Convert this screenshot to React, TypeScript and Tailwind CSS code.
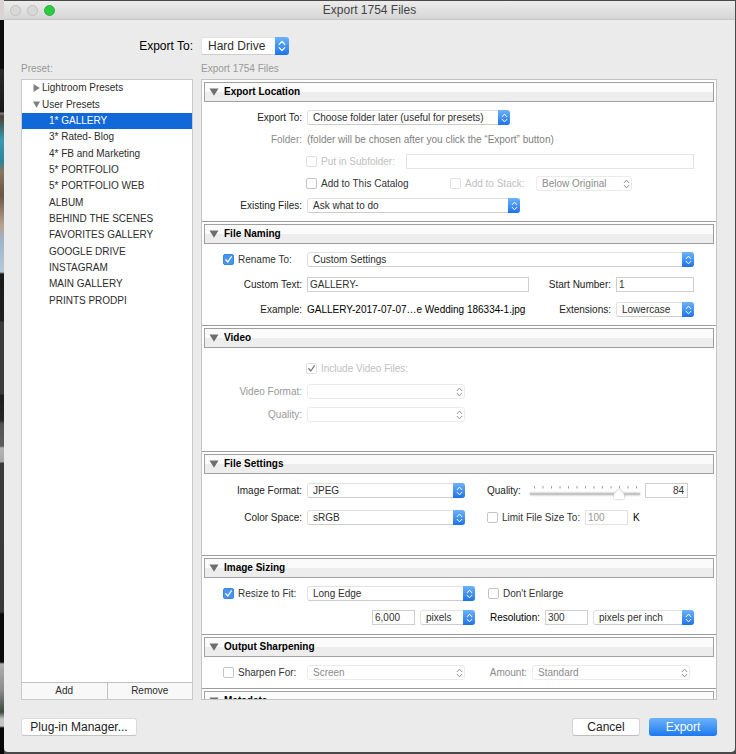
import React, { useState } from "react";
import clsx from "clsx";

type SelectFieldProp = {
  id: string;
  options: string[];
  width: string;
  large?: boolean;
  disabled?: boolean;
};

type CheckFieldProp = {
  id: string;
  label: string;
  checked?: boolean;
  disabled?: boolean;
  faded?: boolean;
};

type TextFieldProp = {
  id: string;
  value?: string;
  width: string;
  disabled?: boolean;
  align?: string;
};

type SectionProp = {
  title: string;
  spacing: string;
  first?: boolean;
  children?: React.ReactNode;
};

const userPresets = [
  "1* GALLERY",
  "3* Rated- Blog",
  "4* FB and Marketing",
  "5* PORTFOLIO",
  "5* PORTFOLIO WEB",
  "ALBUM",
  "BEHIND THE SCENES",
  "FAVORITES GALLERY",
  "GOOGLE DRIVE",
  "INSTAGRAM",
  "MAIN GALLERY",
  "PRINTS PRODPI",
];

const SelectField: React.FC<SelectFieldProp> = ({
  id,
  options,
  width,
  large,
  disabled,
}) => (
  <div className={clsx("relative", large ? "h-[18px]" : "h-[15px]", width)}>
    <select
      id={id}
      disabled={disabled}
      className={clsx(
        "block h-full w-full appearance-none rounded-[3px] border bg-white pr-4 leading-none",
        large ? "pl-[6px] text-[12px]" : "pl-[5px] text-[10px]",
        disabled
          ? "border-[#ebebeb] text-[#8c8c8c] opacity-100"
          : "border-[#e2e2e2] border-b-[#cccccc] text-[#2e2e2e]"
      )}
    >
      {options.map((option) => (
        <option key={option}>{option}</option>
      ))}
    </select>
    <span
      className={clsx(
        "pointer-events-none absolute inset-y-0 right-0 flex items-center justify-center rounded-r-[3px]",
        large ? "w-[14px]" : "w-[12px]",
        disabled
          ? "text-[#8c8c8c]"
          : "bg-linear-to-b from-[#6db3f8] to-[#1b72e8] text-white"
      )}
    >
      <svg
        viewBox="0 0 8 12"
        className={large ? "h-3 w-2" : "h-[10px] w-[7px]"}
        fill="none"
        stroke="currentColor"
        strokeWidth="1.2"
        strokeLinecap="round"
        strokeLinejoin="round"
      >
        <path d="M1.2 4.4 4 1.4l2.8 3M1.2 7.6 4 10.6l2.8-3" />
      </svg>
    </span>
  </div>
);

const CheckField: React.FC<CheckFieldProp> = ({
  id,
  label,
  checked,
  disabled,
  faded,
}) => (
  <div className="flex items-center gap-1 whitespace-nowrap">
    <span className="relative block size-[11px]">
      <input
        id={id}
        type="checkbox"
        defaultChecked={checked}
        disabled={disabled}
        className={clsx(
          "peer block size-[11px] appearance-none rounded-[2px] border bg-white",
          disabled
            ? "border-[#e0e0e0]"
            : "border-[#c4c4c4] checked:border-[#3a86e0] checked:bg-[#4795ee]"
        )}
      />
      <svg
        viewBox="0 0 11 11"
        className={clsx(
          "pointer-events-none absolute inset-0 hidden size-[11px] peer-checked:block",
          disabled ? "text-[#777]" : "text-white"
        )}
        fill="none"
        stroke="currentColor"
        strokeWidth="1.3"
        strokeLinecap="round"
        strokeLinejoin="round"
      >
        <path d="M2.8 5.8 4.8 8 8.3 2.8" />
      </svg>
    </span>
    <label
      htmlFor={id}
      className={faded ? "text-[#c0c0c0]" : "text-[#333]"}
    >
      {label}
    </label>
  </div>
);

const TextField: React.FC<TextFieldProp> = ({
  id,
  value,
  width,
  disabled,
  align,
}) => (
  <input
    id={id}
    type="text"
    defaultValue={value}
    disabled={disabled}
    className={clsx(
      "block h-[15px] min-w-0 border bg-white px-[2px] text-[10px] leading-none",
      disabled ? "border-[#e4e4e4] text-[#999]" : "border-[#cfcfcf] text-[#333]",
      width,
      align
    )}
  />
);

// Right aligned caption in the first column of a section
const RowLabel: React.FC<{ htmlFor: string; text: string; muted?: boolean }> = ({
  htmlFor,
  text,
  muted,
}) => (
  <label
    htmlFor={htmlFor}
    className={clsx(
      "w-[100px] shrink-0 text-right",
      muted ? "text-[#999]" : "text-[#222]"
    )}
  >
    {text}
  </label>
);

const Row: React.FC<{ children?: React.ReactNode }> = ({ children }) => (
  <div className="flex h-[15px] items-center gap-[5px] whitespace-nowrap">
    {children}
  </div>
);

const Section: React.FC<SectionProp> = ({ title, spacing, first, children }) => (
  <section
    className={clsx("shrink-0 pt-[2px]", !first && "border-t border-[#9c9c9c]")}
  >
    <h2 className="mx-[2px]">
      <button
        type="button"
        className="flex h-5 w-full items-center gap-[5px] border border-[#a0a0a0] bg-linear-to-b from-[#fbfbfb] from-50% to-[#ededed] to-50% pl-1 text-[10px] font-bold text-black"
      >
        <svg viewBox="0 0 10 8" className="h-2 w-[10px]" fill="#6e6e6e">
          <path d="M0.5 0.5h9L5 7.8z" />
        </svg>
        {title}
      </button>
    </h2>
    <div className={clsx("flex flex-col pr-[22px]", spacing)}>{children}</div>
  </section>
);

const QualitySlider = () => {
  const [quality, setQuality] = useState(84);

  return (
    <>
      <div className="relative h-[15px] w-[110px]">
        <svg
          viewBox="0 0 110 15"
          className="absolute inset-0 h-[15px] w-[110px]"
          stroke="#a0a0a0"
          strokeWidth="1"
        >
          {Array.from({ length: 13 }, (_, i) => (
            <path key={i} d={`M${4.5 + i * 8.5} 3v2.5`} />
          ))}
        </svg>
        <input
          id="quality"
          type="range"
          min={0}
          max={100}
          value={quality}
          onChange={(e) => setQuality(Number(e.target.value))}
          className="absolute inset-x-0 top-[6px] block h-[10px] w-full appearance-none bg-transparent drop-shadow-[0_0_1px_#aaa] [&::-webkit-slider-runnable-track]:h-[2px] [&::-webkit-slider-runnable-track]:bg-[#c4c4c4] [&::-webkit-slider-thumb]:-mt-1 [&::-webkit-slider-thumb]:h-[10px] [&::-webkit-slider-thumb]:w-[10px] [&::-webkit-slider-thumb]:appearance-none [&::-webkit-slider-thumb]:bg-white [&::-webkit-slider-thumb]:[clip-path:polygon(50%_0,100%_50%,100%_100%,0_100%,0_50%)]"
        />
      </div>
      <input
        type="text"
        aria-label="Quality value"
        value={quality}
        onChange={(e) => setQuality(Number(e.target.value) || 0)}
        className="block h-[15px] w-[43px] border border-[#cfcfcf] bg-white px-[3px] text-right text-[10px] leading-none text-[#333]"
      />
    </>
  );
};

const PresetList = () => {
  const [selected, setSelected] = useState("1* GALLERY");

  return (
    <div className="flex w-[172px] shrink-0 flex-col border border-[#c9c9c9] bg-white">
      <ul className="grid h-[229px] auto-rows-fr text-[#2c2c2c]">
        <li className="flex items-center">
          <button type="button" className="flex items-center gap-[2px] pl-[11px]">
            <svg viewBox="0 0 7 8" className="h-2 w-[7px]" fill="#808080">
              <path d="M0.5 0 6.8 4 0.5 8z" />
            </svg>
            Lightroom Presets
          </button>
        </li>
        <li className="flex items-center">
          <button type="button" className="flex items-center gap-[2px] pl-[11px]">
            <svg viewBox="0 0 7 7" className="size-[7px]" fill="#808080">
              <path d="M0 0.5h7L3.5 6.8z" />
            </svg>
            User Presets
          </button>
        </li>
        {userPresets.map((preset) => (
          <li key={preset} className="flex">
            <button
              type="button"
              onClick={() => setSelected(preset)}
              className={clsx(
                "w-full pl-[27px] text-left",
                preset === selected && "bg-[#1168d8] text-white"
              )}
            >
              {preset}
            </button>
          </li>
        ))}
      </ul>
      <div className="mt-auto flex h-[17px] border-t border-[#c0c0c0] bg-[#f8f8f8] text-[#2c2c2c]">
        <button type="button" className="flex-1 border-r border-[#c0c0c0]">
          Add
        </button>
        <button type="button" className="flex-1">
          Remove
        </button>
      </div>
    </div>
  );
};

const SettingsPanel = () => (
  <div className="flex min-w-0 flex-1 flex-col overflow-hidden border border-[#c4c4c4] bg-white">
    <Section title="Export Location" spacing="gap-[7px] py-2" first>
      <Row>
        <RowLabel htmlFor="location" text="Export To:" />
        <SelectField
          id="location"
          width="w-[203px]"
          options={["Choose folder later (useful for presets)"]}
        />
      </Row>
      <Row>
        <span className="w-[100px] shrink-0 text-right text-[#8c8c8c]">
          Folder:
        </span>
        <span className="text-[#808080]">
          (folder will be chosen after you click the “Export” button)
        </span>
      </Row>
      <Row>
        <div className="ml-[104px] flex flex-1 items-center gap-[11px]">
          <CheckField id="subfolder" label="Put in Subfolder:" disabled faded />
          <TextField id="subfolderName" width="flex-1" disabled />
        </div>
      </Row>
      <Row>
        <div className="ml-[104px] w-[139px]">
          <CheckField id="catalog" label="Add to This Catalog" />
        </div>
        <div className="w-[81px]">
          <CheckField id="stack" label="Add to Stack:" disabled faded />
        </div>
        <SelectField
          id="stackPosition"
          width="w-[96px]"
          options={["Below Original"]}
          disabled
        />
      </Row>
      <Row>
        <RowLabel htmlFor="existing" text="Existing Files:" />
        <SelectField
          id="existing"
          width="w-[213px]"
          options={["Ask what to do"]}
        />
      </Row>
    </Section>

    <Section title="File Naming" spacing="gap-[10px] py-2">
      <Row>
        <div className="w-[100px] shrink-0 pl-[21px]">
          <CheckField id="rename" label="Rename To:" checked />
        </div>
        <SelectField
          id="template"
          width="flex-1"
          options={["Custom Settings"]}
        />
      </Row>
      <Row>
        <RowLabel htmlFor="customText" text="Custom Text:" />
        <TextField id="customText" value="GALLERY-" width="flex-1" />
        <label htmlFor="startNumber" className="w-[77px] text-right text-[#222]">
          Start Number:
        </label>
        <TextField id="startNumber" value="1" width="w-[78px]" />
      </Row>
      <Row>
        <span className="w-[100px] shrink-0 text-right text-[#222]">
          Example:
        </span>
        <span className="min-w-0 flex-1 text-black">
          GALLERY-2017-07-07…e Wedding 186334-1.jpg
        </span>
        <label htmlFor="extensions" className="w-[77px] text-right text-[#222]">
          Extensions:
        </label>
        <SelectField
          id="extensions"
          width="w-[78px]"
          options={["Lowercase", "Uppercase"]}
        />
      </Row>
    </Section>

    <Section title="Video" spacing="gap-2 pt-[13px] pb-[29px]">
      <Row>
        <div className="ml-[104px]">
          <CheckField
            id="includeVideo"
            label="Include Video Files:"
            checked
            disabled
            faded
          />
        </div>
      </Row>
      <Row>
        <RowLabel htmlFor="videoFormat" text="Video Format:" muted />
        <SelectField id="videoFormat" width="w-[158px]" options={[]} disabled />
      </Row>
      <Row>
        <RowLabel htmlFor="videoQuality" text="Quality:" muted />
        <SelectField id="videoQuality" width="w-[158px]" options={[]} disabled />
      </Row>
    </Section>

    <Section title="File Settings" spacing="gap-3 pt-[9px] pb-[30px]">
      <Row>
        <RowLabel htmlFor="imageFormat" text="Image Format:" />
        <SelectField id="imageFormat" width="w-[158px]" options={["JPEG"]} />
        <label htmlFor="quality" className="ml-[17px] w-[38px] text-[#222]">
          Quality:
        </label>
        <QualitySlider />
      </Row>
      <Row>
        <RowLabel htmlFor="colorSpace" text="Color Space:" />
        <SelectField id="colorSpace" width="w-[158px]" options={["sRGB"]} />
        <div className="ml-[17px] w-[93px]">
          <CheckField id="limitSize" label="Limit File Size To:" />
        </div>
        <TextField id="maxSize" value="100" width="w-[43px]" disabled />
        <label htmlFor="maxSize" className="text-black">
          K
        </label>
      </Row>
    </Section>

    <Section title="Image Sizing" spacing="gap-[9px] pt-2 pb-[9px]">
      <Row>
        <div className="w-[100px] shrink-0 pl-[21px]">
          <CheckField id="resize" label="Resize to Fit:" checked />
        </div>
        <SelectField id="resizeMode" width="w-[168px]" options={["Long Edge"]} />
        <div className="ml-2">
          <CheckField id="dontEnlarge" label="Don't Enlarge" />
        </div>
      </Row>
      <Row>
        <div className="flex flex-1 items-center justify-end gap-[5px]">
          <TextField id="edge" value="6,000" width="w-[43px]" />
          <SelectField id="edgeUnit" width="w-[55px]" options={["pixels"]} />
        </div>
        <label htmlFor="resolution" className="w-[60px] text-right text-black">
          Resolution:
        </label>
        <TextField id="resolution" value="300" width="w-[43px]" />
        <SelectField
          id="resolutionUnit"
          width="w-[101px]"
          options={["pixels per inch"]}
        />
      </Row>
    </Section>

    <Section title="Output Sharpening" spacing="py-2">
      <Row>
        <div className="w-[100px] shrink-0 pl-[21px]">
          <CheckField id="sharpen" label="Sharpen For:" />
        </div>
        <SelectField
          id="sharpenFor"
          width="w-[158px]"
          options={["Screen"]}
          disabled
        />
        <label
          htmlFor="amount"
          className="w-[57px] text-right text-[#8c8c8c]"
        >
          Amount:
        </label>
        <SelectField
          id="amount"
          width="w-[158px]"
          options={["Standard"]}
          disabled
        />
      </Row>
    </Section>

    <Section title="Metadata" spacing="py-2" />
  </div>
);

const App = () => {
  return (
    <div className="flex h-screen bg-[#4b484a] font-['Liberation_Sans',Arial,sans-serif] text-[10px] leading-[14px]">
      {/* Desktop behind the window */}
      <div className="w-1 shrink-0 bg-[linear-gradient(#d8d4d4_20px,#0c0c0c_20px,#0c0c0c_68px,#2a2a2a_70px,#161616_112px,#8a8480_113px,#4a3f38_116px,#3b9ab0_140px,#2f8298_162px,#8a7460_172px,#6b5444_195px,#b9a18e_225px,#9db4c8_240px,#b6c9da_272px,#1a1a1a_274px,#1f1f1f_321px,#3b3b3b_322px,#3b3b3b_394px,#1e1e1e_395px,#262626_420px,#555_424px,#5c5c5c_446px,#b4b4b4_448px,#a8a8a8_462px,#3a3a3a_463px,#383838_612px,#0a0a0a_614px,#0a0a0a_662px,#b0b0b0_664px,#8c8c8c_690px,#3c4a3c_712px,#c4c4c4_719px,#c4c4c4_726px,#080808_728px)]" />

      <div className="mt-px mr-px mb-[2px] flex min-w-0 flex-1 flex-col rounded-b-[4px] bg-[#ebebeb]">
        <header className="flex h-[19px] shrink-0 items-center border-b border-[#c8c8c8] bg-linear-to-b from-[#ececec] to-[#d6d6d6] px-[6px]">
          <div className="flex flex-1 gap-[6px]">
            <button
              type="button"
              aria-label="Close"
              className="size-[11px] rounded-full border border-[#c0c0c0] bg-[#d8d8d8]"
            />
            <button
              type="button"
              aria-label="Minimize"
              className="size-[11px] rounded-full border border-[#c0c0c0] bg-[#d8d8d8]"
            />
            <button
              type="button"
              aria-label="Zoom"
              className="size-[11px] rounded-full border border-[#25b53b] bg-[#2fc847]"
            />
          </div>
          <h1 className="text-[12px] text-[#444]">Export 1754 Files</h1>
          <div className="flex-1" />
        </header>

        <main className="flex min-h-0 flex-1 flex-col pt-[17px] pr-[18px] pb-4 pl-[17px]">
          <div className="flex items-center gap-2">
            <label
              htmlFor="destination"
              className="w-[172px] text-right text-[12px] text-black"
            >
              Export To:
            </label>
            <SelectField
              id="destination"
              width="w-[88px]"
              options={["Hard Drive"]}
              large
            />
          </div>

          <div className="flex gap-2 pt-[7px] pb-[3px] text-[#999]">
            <span className="w-[172px]">Preset:</span>
            <span>Export 1754 Files</span>
          </div>

          <div className="flex min-h-0 flex-1 gap-2">
            <PresetList />
            <SettingsPanel />
          </div>

          <footer className="mt-[18px] flex h-[18px] shrink-0 gap-[9px] text-[12px] text-[#222]">
            <button
              type="button"
              className="mr-auto w-[116px] rounded-[3px] border border-[#dadada] border-b-[#c4c4c4] bg-white"
            >
              Plug-in Manager...
            </button>
            <button
              type="button"
              className="w-[68px] rounded-[3px] border border-[#d4d4d4] border-b-[#bdbdbd] bg-white"
            >
              Cancel
            </button>
            <button
              type="button"
              className="w-[68px] rounded-[3px] bg-linear-to-b from-[#6bb2f9] to-[#1878f0] text-white"
            >
              Export
            </button>
          </footer>
        </main>
      </div>
    </div>
  );
};

export default App;
